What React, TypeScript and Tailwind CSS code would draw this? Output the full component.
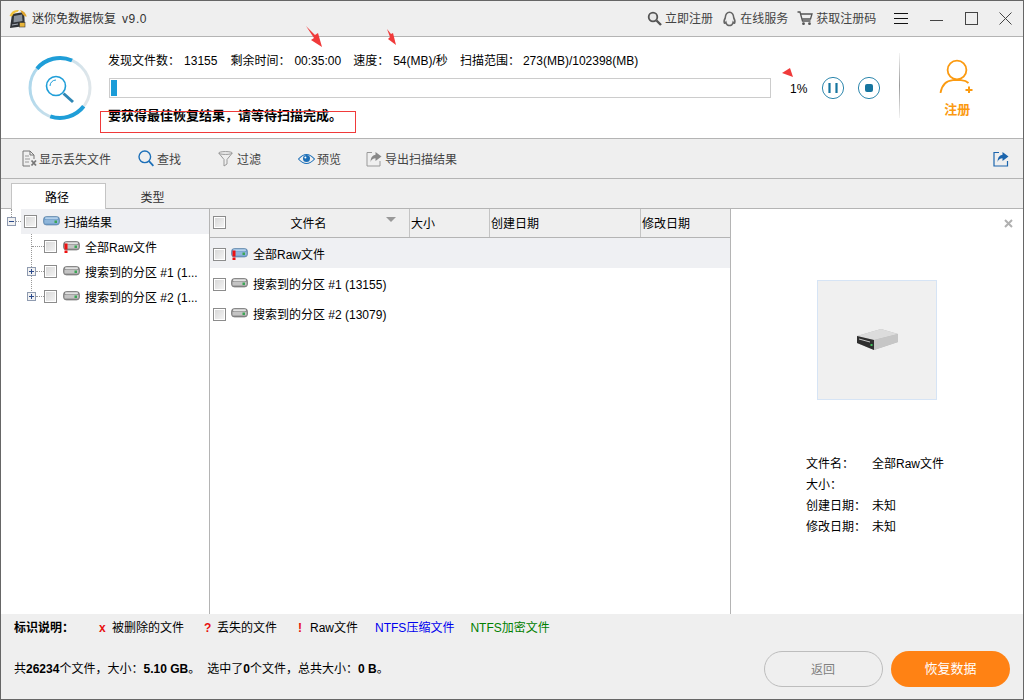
import React from 'react';

const FONT = "font-['Liberation_Sans','Noto_Sans_CJK_SC',sans-serif]";

function Checkbox() {
  return (
    <span className="block w-[13px] h-[13px] shrink-0 border border-[#8c8c8c] bg-gradient-to-br from-[#d6d6d6] to-[#f6f6f6] shadow-[inset_0_0_0_1px_#ffffff]" />
  );
}

function Expander({ minus }: { minus?: boolean }) {
  return (
    <span className="flex items-center justify-center w-[9px] h-[9px] shrink-0 border border-[#8f9bb0] bg-[#f2f2f2] text-[#2b4a8b]">
      <svg width="7" height="7" viewBox="0 0 7 7">
        <path d={minus ? 'M1 3.5h5' : 'M1 3.5h5M3.5 1v5'} stroke="currentColor" strokeWidth="1" />
      </svg>
    </span>
  );
}

function DriveIcon({ blue, raw }: { blue?: boolean; raw?: boolean }) {
  const top = blue ? '#b4d0ea' : '#e2e2e2';
  const body = blue ? '#6f9cc8' : '#8f8f8f';
  const edge = blue ? '#50789f' : '#5f5f5f';
  const band = blue ? '#8fb6da' : '#c4c4c4';
  return (
    <svg width="17" height="12" viewBox="0 0 17 12" className="shrink-0">
      <rect x="0.5" y="0.5" width="16" height="8.5" rx="3" fill={body} stroke={edge} strokeWidth="0.6" />
      <rect x="2" y="1.2" width="13" height="2" rx="1" fill={top} />
      <rect x="1.5" y="4" width="14" height="3.5" fill={band} />
      <rect x="11.5" y="4.5" width="2.5" height="2.5" fill="#3aa655" />
      {raw && <path d="M1.5 2.5h3v6h-3zM1.5 9.5h3v2.5h-3z" fill="#ee1111" />}
    </svg>
  );
}

function TreeRow({ label, expander, raw }: { label: string; expander?: boolean; raw?: boolean }) {
  return (
    <div className="flex items-center h-[25px]">
      <span className="w-[26px] shrink-0" />
      {expander ? (
        <span className="relative"><Expander /></span>
      ) : (
        <span className="w-[5px] shrink-0" />
      )}
      <span className={`block h-px shrink-0 border-t border-dotted border-[#999] ${expander ? 'w-[8px]' : 'w-[12px]'}`} />
      <Checkbox />
      <span className="ml-[6px]"><DriveIcon raw={raw} /></span>
      <span className="ml-[5px] pt-[2px] text-[12px] text-black whitespace-nowrap">{label}</span>
    </div>
  );
}

function FileRow({ label, active, raw, blue }: { label: string; active?: boolean; raw?: boolean; blue?: boolean }) {
  return (
    <div className={`flex items-center h-[30px] pl-[3px] pt-[2px] ${active ? 'bg-[#eff0f3]' : ''}`}>
      <Checkbox />
      <span className="ml-[5px]"><DriveIcon raw={raw} blue={blue} /></span>
      <span className="ml-[5px] pt-px text-[12px] text-black">{label}</span>
    </div>
  );
}

function ToolItem({ icon, label, className }: { icon: React.ReactNode; label: string; className: string }) {
  return (
    <div className={`flex items-center ${className}`}>
      {icon}
      <span className="pt-[2px] text-[12px] text-[#444]">{label}</span>
    </div>
  );
}

function RedArrow({ className, d, w, h }: { className: string; d: string; w: number; h: number }) {
  return (
    <svg width={w} height={h} viewBox={`0 0 ${w} ${h}`} className={`absolute ${className}`}>
      <path d={d} fill="#f03a3a" />
    </svg>
  );
}

export default function App() {
  return (
    <div className={`relative flex flex-col w-[1024px] h-[700px] overflow-hidden border border-[#666] bg-white ${FONT}`}>
      {/* title bar */}
      <div className="flex items-center h-[36px] shrink-0 bg-[#efefef] border-b border-[#b4b4b4]">
        <svg width="18" height="20" viewBox="0 0 18 20" className="ml-[8px] shrink-0">
          <path d="M3 5 L15 3 L16 17 L1 19 Z" fill="#2f3338" />
          <path d="M5 7 L13 5.5 L13.5 12 L4.5 13.5 Z" fill="#8a929c" />
          <path d="M3 16 L9 15" stroke="#aab0b8" strokeWidth="1" />
          <rect x="10.5" y="13.5" width="5.5" height="4.5" fill="#e8b53a" stroke="#3a3a3a" strokeWidth="0.6" />
          <path d="M0.5 7 Q3 0 10 1 L8.5 3 Q5 3 3 7.5 Z" fill="#f0c33c" />
          <path d="M17.5 8 Q17 2.5 11 1 L14 6 Z" fill="#dfa52e" />
        </svg>
        <span className="ml-[5px] pt-px text-[12px] text-[#333]">迷你免数据恢复</span>
        <span className="ml-[6px] pt-px text-[12px] tracking-[0.6px] text-[#333]">v9.0</span>
        <svg width="15" height="15" viewBox="0 0 15 15" className="ml-[500px] shrink-0">
          <circle cx="6" cy="6" r="4.3" fill="#e8e8e8" stroke="#555" strokeWidth="1.8" />
          <path d="M9.5 9.5 L14 14" stroke="#555" strokeWidth="2.4" />
        </svg>
        <span className="ml-[3px] pt-px text-[12px] text-[#444]">立即注册</span>
        <svg width="15" height="16" viewBox="0 0 15 16" className="ml-[9px] shrink-0">
          <path d="M7.5 1.2 C3.8 1.2 3.4 4.5 3.2 7 C2.4 8.5 1.6 10.5 2.4 12 C3 12.4 3.4 11.6 3.8 11.2 C4 12.6 4.8 13.4 5.4 14 C7 14.8 8 14.8 9.6 14 C10.2 13.4 11 12.6 11.2 11.2 C11.6 11.6 12 12.4 12.6 12 C13.4 10.5 12.6 8.5 11.8 7 C11.6 4.5 11.2 1.2 7.5 1.2 Z" fill="none" stroke="#666" strokeWidth="1.6" />
        </svg>
        <span className="ml-[3px] pt-px text-[12px] text-[#444]">在线服务</span>
        <svg width="16" height="15" viewBox="0 0 16 15" className="ml-[9px] shrink-0">
          <path d="M0.5 1 H3 L5.5 10 H13.5" fill="none" stroke="#555" strokeWidth="1.3" />
          <path d="M4 3 H15 L13.5 8 H5.2" fill="none" stroke="#555" strokeWidth="1.3" />
          <circle cx="6.5" cy="12.7" r="1.4" fill="#555" />
          <circle cx="12.5" cy="12.7" r="1.4" fill="#555" />
        </svg>
        <span className="ml-[3px] pt-px text-[12px] text-[#444]">获取注册码</span>
        <svg width="14" height="11" viewBox="0 0 14 11" className="ml-[18px] shrink-0">
          <path d="M0 0.5H14M0 5.5H14M0 10.5H14" stroke="#111" strokeWidth="1" />
        </svg>
        <svg width="13" height="13" viewBox="0 0 13 13" className="ml-[22px] shrink-0">
          <path d="M0 8.5H13" stroke="#444" strokeWidth="1" />
        </svg>
        <svg width="13" height="13" viewBox="0 0 13 13" className="ml-[22px] shrink-0">
          <rect x="0.5" y="0.5" width="12" height="12" fill="none" stroke="#444" strokeWidth="1" />
        </svg>
        <svg width="13" height="13" viewBox="0 0 13 13" className="ml-[21px] shrink-0">
          <path d="M0.5 0.5L12.5 12.5M12.5 0.5L0.5 12.5" stroke="#444" strokeWidth="1" />
        </svg>
      </div>

      {/* scan status */}
      <div className="relative flex items-start h-[102px] shrink-0 bg-white border-b border-[#b4b4b4]">
        <svg width="66" height="66" viewBox="0 0 66 66" className="ml-[26px] mt-[18px] shrink-0">
          <defs>
            <linearGradient id="ring" x1="0" y1="0" x2="1" y2="0.3">
              <stop offset="0" stopColor="#a9d6ec" />
              <stop offset="1" stopColor="#dfe6ea" />
            </linearGradient>
          </defs>
          <circle cx="33" cy="33" r="30" fill="none" stroke="url(#ring)" strokeWidth="3" />
          <path d="M10 13.7 A30 30 0 0 1 45 5.5" fill="none" stroke="#1f9ed8" strokeWidth="4" />
          <path d="M23.3 61.3 A30 30 0 0 0 56.7 51.3" fill="none" stroke="#1f9ed8" strokeWidth="4" />
          <circle cx="29" cy="31" r="9.5" fill="none" stroke="#1f9ed8" strokeWidth="1.6" />
          <path d="M23 31 A6 6 0 0 1 29 25" fill="none" stroke="#1f9ed8" strokeWidth="1" />
          <path d="M36.5 38.5 L46 47" stroke="#2f86b4" strokeWidth="3" />
        </svg>
        <div className="ml-[15px] w-[663px] shrink-0">
          <div className="flex items-center h-[16px] mt-[16px] text-[12px] text-black whitespace-nowrap">
            <span>发现文件数{'\uFF1A'}</span>
            <span className="ml-[4px]">13155</span>
            <span className="ml-[13px]">剩余时间{'\uFF1A'}</span>
            <span className="ml-[4px]">00:35:00</span>
            <span className="ml-[12px]">速度{'\uFF1A'}</span>
            <span className="ml-[4px]">54(MB)/秒</span>
            <span className="ml-[12px]">扫描范围{'\uFF1A'}</span>
            <span className="ml-[3px]">273(MB)/102398(MB)</span>
          </div>
          <div className="ml-px mt-[9px] h-[20px] border border-[#cccccc] p-px">
            <div className="w-[6px] h-full bg-[#1a9cd8]" />
          </div>
          <div className="mt-[10px] h-[15px] leading-[15px] text-[13px] font-bold text-black whitespace-nowrap">要获得最佳恢复结果{'\uFF0C'}请等待扫描完成。</div>
        </div>
        <span className="ml-[19px] mt-[45px] text-[12px] leading-[14px] text-black">1%</span>
        <svg width="24" height="24" viewBox="0 0 24 24" className="ml-[14px] mt-[39px] shrink-0">
          <circle cx="12" cy="12" r="10.6" fill="none" stroke="#2e87ad" strokeWidth="1" />
          <path d="M8.5 7V17M15.5 7V17" stroke="#16759f" strokeWidth="2.2" />
        </svg>
        <svg width="24" height="24" viewBox="0 0 24 24" className="ml-[12px] mt-[39px] shrink-0">
          <circle cx="12" cy="12" r="10.6" fill="none" stroke="#2e87ad" strokeWidth="1" />
          <rect x="8" y="8" width="8" height="8" rx="2" fill="#16759f" />
        </svg>
        <div className="ml-[18px] mt-[16px] w-px h-[65px] shrink-0 bg-gradient-to-b from-[#f4f4f4] via-[#9a9a9a] to-[#f4f4f4]" />
        <div className="ml-[39px] mt-[20px] flex flex-col items-center w-[36px] shrink-0">
          <svg width="36" height="36" viewBox="0 0 36 36" className="shrink-0">
            <circle cx="18" cy="13" r="9.4" fill="none" stroke="#fb9a10" strokeWidth="1.8" />
            <path d="M1.5 36 Q3.5 24 14 23.2 H22 Q27 23.6 29.5 26" fill="none" stroke="#fb9a10" strokeWidth="1.8" />
            <path d="M30 29.5V36M26.5 33H33.5" stroke="#fb9a10" strokeWidth="2" />
          </svg>
          <span className="mt-[9px] text-[13px] leading-[15px] font-bold text-[#fb9a10] whitespace-nowrap">注册</span>
        </div>
        {/* annotations drawn on top of the screenshot */}
        <span className="absolute left-[99px] top-[74px] w-[256px] h-[22px] border border-[#f03a3a]" />
        <RedArrow className="left-[304px] top-[-11px]" w={18} h={22} d="M1 0 L10 9 L13 7 L17 21 L6 14 L9 12 Z" />
        <RedArrow className="left-[385px] top-[-8px]" w={11} h={17} d="M1 0 L5 5 L7 4 L10 16 L2 10 L4 8 Z" />
        <RedArrow className="left-[781px] top-[31px]" w={12} h={10} d="M0 5 L8 0 L11 9 Z" />
      </div>

      {/* toolbar */}
      <div className="flex items-center h-[40px] shrink-0 bg-[#efefef] border-b border-[#b4b4b4] pr-[14px]">
        <ToolItem
          className="ml-[21px]"
          label="显示丢失文件"
          icon={
            <svg width="15" height="17" viewBox="0 0 15 17" className="mr-[2px] shrink-0">
              <path d="M1 1H8L12 5V9M8 1V5H12M1 1V16H8" fill="none" stroke="#777" strokeWidth="1" />
              <path d="M3 6H7M3 9H8M3 12H7" stroke="#999" strokeWidth="1" />
              <path d="M9.5 10.5L14 15.5M14 10.5L9.5 15.5" stroke="#777" strokeWidth="1.8" />
            </svg>
          }
        />
        <ToolItem
          className="ml-[27px]"
          label="查找"
          icon={
            <svg width="16" height="17" viewBox="0 0 16 17" className="mr-[3px] shrink-0">
              <circle cx="6.8" cy="6.8" r="5.8" fill="none" stroke="#1c6fb8" strokeWidth="1.4" />
              <path d="M11 11.2L15.4 15.8" stroke="#1c6fb8" strokeWidth="1.8" />
            </svg>
          }
        />
        <ToolItem
          className="ml-[37px]"
          label="过滤"
          icon={
            <svg width="15" height="16" viewBox="0 0 15 16" className="mr-[4px] shrink-0">
              <ellipse cx="7.5" cy="2" rx="6.8" ry="1.4" fill="none" stroke="#999" strokeWidth="1" />
              <path d="M0.7 2L6 8.5V15L9 13V8.5L14.3 2" fill="none" stroke="#999" strokeWidth="1" />
            </svg>
          }
        />
        <ToolItem
          className="ml-[37px]"
          label="预览"
          icon={
            <svg width="17" height="12" viewBox="0 0 17 12" className="mr-[2px] shrink-0">
              <path d="M0.5 6 Q8.5 -3 16.5 6 Q8.5 15 0.5 6 Z" fill="none" stroke="#1c6fb8" strokeWidth="1.1" />
              <circle cx="8.5" cy="5.6" r="3.5" fill="#1c6fb8" />
              <circle cx="7.4" cy="4.5" r="1" fill="#ffffff" />
            </svg>
          }
        />
        <ToolItem
          className="ml-[25px]"
          label="导出扫描结果"
          icon={
            <svg width="16" height="16" viewBox="0 0 16 16" className="mr-[3px] shrink-0">
              <path d="M6 1.5H1V15H14V10" fill="none" stroke="#999" strokeWidth="1" />
              <path d="M9.5 1L15.5 5.5L9.5 10V7.3 Q6 7.3 4.5 11 Q4.5 4.5 9.5 3.7 Z" fill="#888" />
            </svg>
          }
        />
        <svg width="16" height="16" viewBox="0 0 16 16" className="ml-auto shrink-0">
          <path d="M6 1.5H1V15H14.5V10" fill="none" stroke="#1c65ad" strokeWidth="1.2" />
          <path d="M9.5 1L15.5 5.5L9.5 10V7.3 Q6 7.3 4.5 11 Q4.5 4.5 9.5 3.7 Z" fill="#1c65ad" />
        </svg>
      </div>

      {/* tabs */}
      <div className="flex items-end h-[30px] shrink-0 bg-[#efefef] border-b border-[#b4b4b4] pl-[10px]">
        <div className="flex items-center justify-center w-[95px] h-[26px] -mb-px pt-[2px] pr-[3px] bg-white border border-b-0 border-[#c4c4c4] text-[12px] text-black">路径</div>
        <div className="flex items-center justify-center w-[95px] h-[26px] pt-[6px] pr-[2px] text-[12px] text-[#333]">类型</div>
      </div>

      {/* main */}
      <div className="flex flex-1 min-h-0 bg-white">
        <div className="relative w-[209px] shrink-0 border-r border-[#b4b4b4]">
          {/* dotted tree guides */}
          <span className="absolute left-[10px] top-0 h-[8px] border-l border-dotted border-[#999]" />
          <span className="absolute left-[30px] top-[25px] h-[63px] border-l border-dotted border-[#999]" />
          <div className="flex items-center h-[25px]">
            <span className="ml-[6px]"><Expander minus /></span>
            <span className="block w-[5px] h-px shrink-0 border-t border-dotted border-[#999]" />
            <div className="flex flex-1 items-center h-full pl-[3px] bg-[#eff0f3]">
              <Checkbox />
              <span className="ml-[6px]"><DriveIcon blue /></span>
              <span className="ml-[4px] pt-[2px] text-[12px] text-black">扫描结果</span>
            </div>
          </div>
          <TreeRow label="全部Raw文件" raw />
          <TreeRow label="搜索到的分区 #1 (1..." expander />
          <TreeRow label="搜索到的分区 #2 (1..." expander />
        </div>

        <div className="w-[521px] shrink-0 border-r border-[#b4b4b4]">
          <div className="flex h-[29px] bg-[#efefef] border-b border-[#b4b4b4] text-[12px] text-black">
            <div className="relative flex items-center justify-center w-[200px] shrink-0 pt-px border-r border-[#c4c4c4]">
              <span className="absolute left-[3px] top-[7px]"><Checkbox /></span>
              <span className="ml-[-2px]">文件名</span>
              <span className="absolute right-[13px] top-[8px] w-0 h-0 border-x-[5px] border-t-[5px] border-x-transparent border-t-[#999]" />
            </div>
            <div className="flex items-center w-[80px] shrink-0 pl-px pt-px border-r border-[#c4c4c4]">大小</div>
            <div className="flex items-center w-[151px] shrink-0 pl-px pt-px border-r border-[#c4c4c4]">创建日期</div>
            <div className="flex items-center flex-1 pl-px pt-px">修改日期</div>
          </div>
          <FileRow label="全部Raw文件" active raw blue />
          <FileRow label="搜索到的分区 #1 (13155)" />
          <FileRow label="搜索到的分区 #2 (13079)" />
        </div>

        <div className="relative flex-1 min-w-0">
          <svg width="9" height="9" viewBox="0 0 9 9" className="absolute right-[10px] top-[10px]">
            <path d="M1 1L8 8M8 1L1 8" stroke="#b0b0b0" strokeWidth="2" />
          </svg>
          <div className="flex items-center justify-center w-[120px] h-[120px] ml-[86px] mt-[71px] bg-[#f0f0f0] border border-[#d6e4f5]">
            <svg width="44" height="24" viewBox="0 0 44 24">
              <path d="M2 8 L26 1 L43 6 L43 14 L19 22 L2 15 Z" fill="#b9b9b9" />
              <path d="M2 8 L26 1 L43 6 L19 12 Z" fill="#dcdcdc" />
              <path d="M19 12 L43 6 L43 14 L19 22 Z" fill="#c6c6c6" />
              <path d="M2 8 L19 12 L19 22 L2 15 Z" fill="#2f2f2f" />
              <path d="M4 11 L15 14" stroke="#c8c8c8" strokeWidth="1" />
              <rect x="15.5" y="16" width="2" height="2" fill="#3fbf5a" />
            </svg>
          </div>
          <div className="grid grid-cols-[66px_auto] justify-start ml-[75px] mt-[54px] text-[12px] leading-[21px] text-black">
            <span>文件名{'\uFF1A'}</span><span>全部Raw文件</span>
            <span className="col-span-2">大小{'\uFF1A'}</span>
            <span>创建日期{'\uFF1A'}</span><span>未知</span>
            <span>修改日期{'\uFF1A'}</span><span>未知</span>
          </div>
        </div>
      </div>

      {/* footer */}
      <div className="relative flex flex-col h-[85px] shrink-0 bg-[#efefef] text-[12px] text-black">
        <div className="flex items-center h-[16px] mt-[6px] pl-[13px] whitespace-nowrap">
          <span className="font-bold w-[85px]">标识说明{'\uFF1A'}</span>
          <span className="w-[13px] font-bold text-[#e81010]">x</span>
          <span>被删除的文件</span>
          <span className="ml-[20px] w-[13px] font-bold text-[#e81010]">?</span>
          <span>丢失的文件</span>
          <span className="ml-[21px] w-[12px] font-bold text-[#e81010]">!</span>
          <span>Raw文件</span>
          <span className="ml-[17px] text-[#0000ee]">NTFS压缩文件</span>
          <span className="ml-[16px] text-[#008000]">NTFS加密文件</span>
        </div>
        <div className="flex items-center h-[16px] mt-[25px] pl-[13px] whitespace-nowrap">
          共<b>26234</b>个文件{'\uFF0C'}大小{'\uFF1A'}<b>5.10 GB</b>。<span className="ml-[7px]">选中了<b>0</b>个文件{'\uFF0C'}总共大小{'\uFF1A'}<b>0 B</b>。</span>
        </div>
        <div className="absolute right-[13px] top-[37px] flex gap-[8px]">
          <div className="flex items-center justify-center w-[119px] h-[36px] pt-px pr-px rounded-full border border-[#bdbdbd] text-[#808080]">返回</div>
          <div className="flex items-center justify-center w-[119px] h-[36px] rounded-full bg-[#ff8214] text-white text-[13px]">恢复数据</div>
        </div>
      </div>
    </div>
  );
}
